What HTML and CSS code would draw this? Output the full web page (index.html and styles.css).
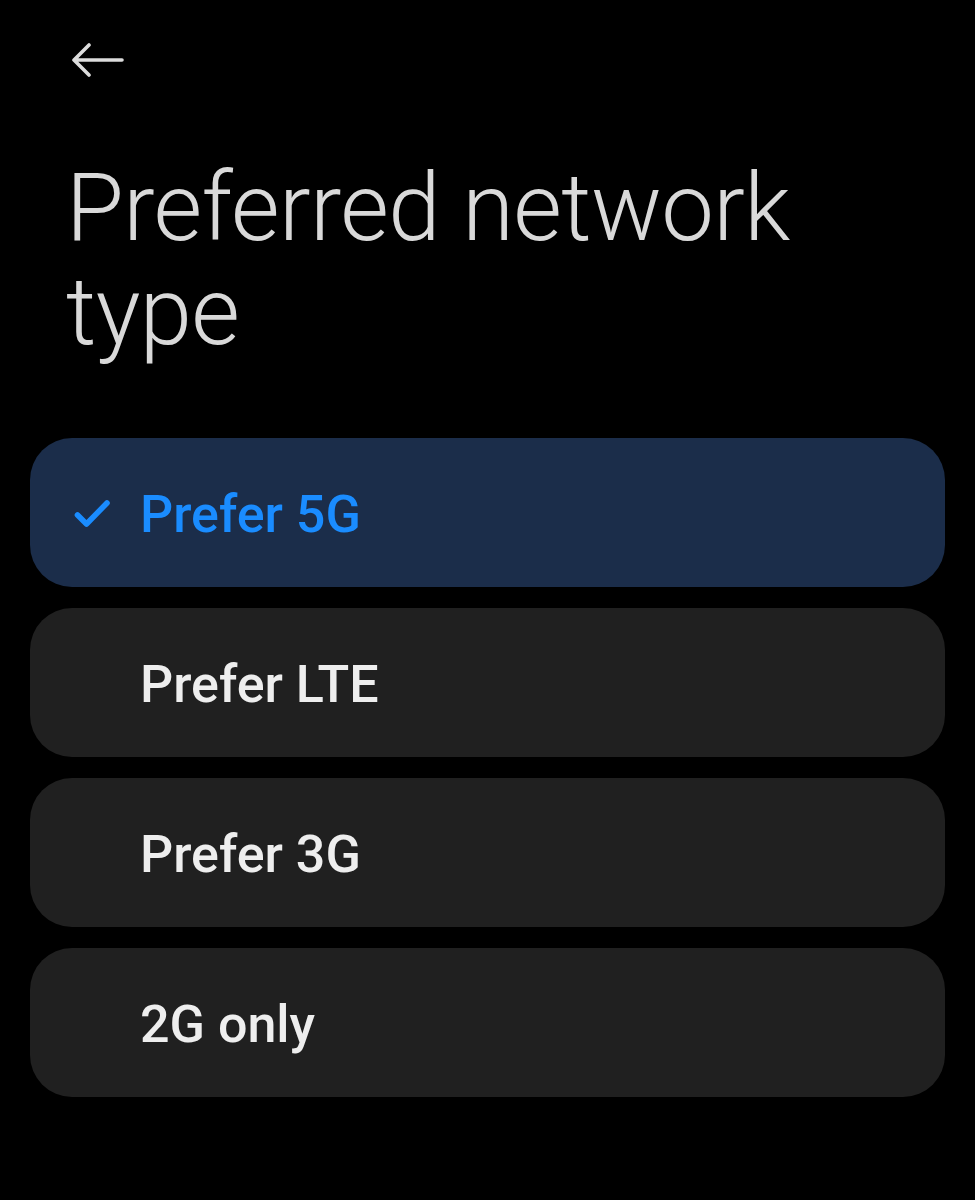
FILE: index.html
```html
<!DOCTYPE html>
<html>
<head>
<meta charset="utf-8">
<link rel="stylesheet" href="styles.css">
</head>
<body>
<div class="page">
  <div class="topbar">
    <svg class="back" width="56" height="36" viewBox="0 0 56 36">
      <path d="M52 17H5M19 2L4 17L19 32" fill="none" stroke="#dcdcdc" stroke-width="3.6" stroke-linecap="round" stroke-linejoin="round"/>
    </svg>
  </div>
  <h1 class="title">Preferred network type</h1>
  <div class="list">
    <div class="item selected">
      <svg class="check" width="38" height="32" viewBox="0 0 38 32">
        <path d="M3.5 17L12.5 26L33 5" fill="none" stroke="#1a8cff" stroke-width="5.6" stroke-linecap="round" stroke-linejoin="round"/>
      </svg>
      <span class="label">Prefer 5G</span>
    </div>
    <div class="item"><span class="label">Prefer LTE</span></div>
    <div class="item"><span class="label">Prefer 3G</span></div>
    <div class="item"><span class="label">2G only</span></div>
  </div>
</div>
</body>
</html>
```

FILE: styles.css
```css
html, body {
  margin: 0;
  padding: 0;
  background: #000;
}
.page {
  width: 975px;
  height: 1200px;
  background: #000;
  font-family: Roboto, "Noto Sans", sans-serif;
}
.topbar {
  height: 118px;
  padding-left: 70px;
  padding-top: 43px;
  box-sizing: border-box;
}
.back {
  display: block;
}
.title {
  margin: 0;
  padding: 38px 60px 0 66px;
  font-weight: 300;
  font-size: 94px;
  line-height: 104px;
  color: #d9d9d9;
  letter-spacing: -0.6px;
  height: 296px;
  box-sizing: border-box;
}
.list {
  display: flex;
  flex-direction: column;
  gap: 21px;
  padding: 0 30px;
  margin-top: 24px;
}
.item {
  height: 149px;
  border-radius: 42px;
  background: #202020;
  display: flex;
  align-items: center;
  padding-left: 110px;
  position: relative;
}
.item.selected {
  background: #1b2d4a;
}
.check {
  position: absolute;
  left: 44px;
  top: 60px;
}
.label {
  font-size: 52px;
  font-weight: 500;
  color: #eeeeee;
  padding-top: 4px;
}
.selected .label {
  color: #1a8cff;
}
```
